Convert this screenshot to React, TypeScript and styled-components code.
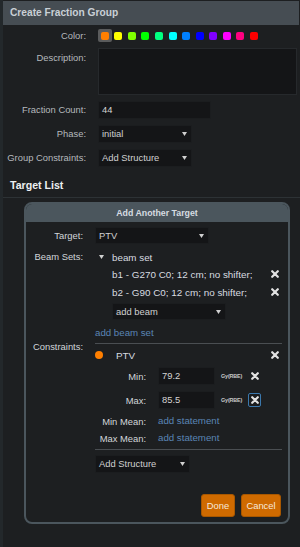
import React from 'react';
import styled, { createGlobalStyle } from 'styled-components';

const Global = createGlobalStyle`
  html, body { margin: 0; padding: 0; background: #1d1f21; }
  body { font-family: "Liberation Sans", Arial, sans-serif; font-size: 9.4px; color: #d0d4d8; }
  * { box-sizing: border-box; }
`;

const Frame = styled.div`
  width: 300px;
  height: 547px;
  background: #1d1f21;
  border-left: 3px solid #23282b;
  overflow: hidden;
  display: flex;
  flex-direction: column;
`;

const TitleBar = styled.div`
  margin: 1px 1px 0 0;
  height: 24px;
  background: #464d53;
  color: #c9d0d6;
  font-weight: bold;
  font-size: 10.2px;
  line-height: 24px;
  padding-left: 7px;
`;

const FormGrid = styled.div`
  display: grid;
  grid-template-columns: 83px 199px;
  column-gap: 12px;
  row-gap: 6px;
  padding-top: 4px;
`;

const Label = styled.div<{ $top?: boolean; $light?: boolean }>`
  text-align: right;
  color: ${p => (p.$light ? '#d2d6da' : '#b5b9bd')};
  align-self: ${p => (p.$top ? 'start' : 'center')};
  padding-top: ${p => (p.$top ? '4px' : '0')};
  white-space: nowrap;
  line-height: 12px;
`;

const Swatches = styled.div`
  display: flex;
  height: 13px;
  align-items: center;
`;

const SwatchCell = styled.div<{ $selected?: boolean }>`
  width: 13.55px;
  height: 13px;
  flex: none;
  display: flex;
  align-items: center;
  justify-content: center;
  border-radius: 2px;
  background: ${p => (p.$selected ? '#5a5b5c' : 'transparent')};
`;

const Dot = styled.div<{ $c: string }>`
  width: 8px;
  height: 8px;
  border-radius: 2px;
  background: ${p => p.$c};
`;

const TextArea = styled.div`
  height: 47px;
  width: 199px;
  background: #141517;
  border: 1px solid #26292c;
`;

const Input = styled.div<{ $w: number; $h?: number }>`
  width: ${p => p.$w}px;
  height: ${p => p.$h ?? 18}px;
  background: #141517;
  border: 1px solid #1b1d1f;
  color: #d4d4d4;
  padding-left: 3px;
  display: flex;
  align-items: center;
  line-height: 12px;
`;

const SelectBox = styled.div<{ $w: number; $h?: number }>`
  width: ${p => p.$w}px;
  height: ${p => p.$h ?? 18}px;
  background: #141517;
  border: 1px solid #1b1d1f;
  color: #d0d0d0;
  padding: 0 4px 0 3px;
  display: flex;
  align-items: center;
  justify-content: space-between;
  line-height: 12px;
  white-space: nowrap;
`;

const Heading = styled.div`
  margin-top: 12px;
  font-weight: bold;
  font-size: 10.6px;
  color: #eceff1;
  padding: 0 0 6px 7px;
  line-height: 12px;
  border-bottom: 1px solid #2d3235;
`;

const Panel = styled.div`
  margin: 4px 0 0 21px;
  width: 266px;
  border: 2px solid #4b565d;
  border-radius: 8px;
  overflow: hidden;
  background: #1d1f21;
`;

const PanelHeader = styled.div`
  height: 18px;
  background: #4b565d;
  color: #d6dce1;
  font-weight: bold;
  font-size: 8.8px;
  line-height: 18px;
  text-align: center;
`;

const PanelBody = styled.div`
  padding: 5px 6px 5px 0;
  display: flex;
  flex-direction: column;
`;

const FieldRow = styled.div<{ $mt?: number }>`
  display: grid;
  grid-template-columns: 57px 1fr;
  column-gap: 12px;
  margin-top: ${p => p.$mt ?? 0}px;
`;

const BeamBlock = styled.div`
  display: flex;
  flex-direction: column;
`;

const BeamHead = styled.div`
  height: 14px;
  display: flex;
  align-items: center;
  padding-left: 4px;
  gap: 8px;
  color: #d8dce0;
  font-size: 9.8px;
`;

const BeamList = styled.div`
  padding-left: 17px;
  display: flex;
  flex-direction: column;
`;

const ItemRow = styled.div<{ $h: number; $mt?: number }>`
  height: ${p => p.$h}px;
  margin-top: ${p => p.$mt ?? 0}px;
  display: flex;
  align-items: center;
  justify-content: space-between;
  padding-right: 3px;
  color: #d8dce0;
  font-size: 9.9px;
  white-space: nowrap;
`;

const Link = styled.div<{ $mt?: number }>`
  color: #5a85b5;
  line-height: 12px;
  font-size: 9.7px;
  margin-top: ${p => p.$mt ?? 0}px;
`;

const ConstraintBlock = styled.div`
  display: flex;
  flex-direction: column;
  padding-top: 2px;
`;

const Divider = styled.div<{ $mt?: number }>`
  height: 1px;
  background: #4a4e52;
  margin-top: ${p => p.$mt ?? 0}px;
`;

const StructName = styled.div`
  display: flex;
  align-items: center;
  gap: 13px;
`;

const Circle = styled.div`
  width: 8px;
  height: 8px;
  border-radius: 50%;
  background: #ff7f00;
`;

const CRow = styled.div<{ $h: number; $mt: number }>`
  display: flex;
  align-items: center;
  height: ${p => p.$h}px;
  margin-top: ${p => p.$mt}px;
  white-space: nowrap;
`;

const CLabel = styled.div`
  width: 51px;
  text-align: right;
  margin-right: 12px;
  color: #d2d6da;
`;

const Unit = styled.div`
  margin-left: 6px;
  width: 22px;
  font-size: 5.4px;
  font-weight: bold;
  color: #c8c8c8;
  letter-spacing: -0.15px;
`;

const XWrap = styled.div<{ $ml: number; $boxed?: boolean }>`
  margin-left: ${p => p.$ml}px;
  width: ${p => (p.$boxed ? 13 : 8)}px;
  height: ${p => (p.$boxed ? 14 : 8)}px;
  display: flex;
  align-items: center;
  justify-content: center;
  border: ${p => (p.$boxed ? '1px solid #3b78ad' : 'none')};
  border-radius: 2px;
  background: ${p => (p.$boxed ? '#1a1c1e' : 'transparent')};
`;

const Buttons = styled.div`
  display: flex;
  justify-content: flex-end;
  gap: 6px;
  margin-top: 21px;
  padding-right: 1px;
`;

const Button = styled.div<{ $w: number }>`
  width: ${p => p.$w}px;
  height: 23px;
  background: #cf6a00;
  border: 1px solid #a85700;
  border-radius: 3px;
  color: #f6e8da;
  display: flex;
  align-items: center;
  justify-content: center;
`;

const Arrow = ({ w = 5, h = 4 }: { w?: number; h?: number }) => (
  <svg width={w} height={h} viewBox={`0 0 ${w} ${h}`}>
    <polygon points={`0,0 ${w},0 ${w / 2},${h}`} fill="#d0d0d0" />
  </svg>
);

const XIcon = () => (
  <svg width="8" height="8" viewBox="0 0 8 8">
    <path d="M1.2 1.2L6.8 6.8M6.8 1.2L1.2 6.8" stroke="#e2e2e2" strokeWidth="2.2" strokeLinecap="round" />
  </svg>
);

const colors = ['#ff7f00', '#ffff00', '#80ff00', '#00ff00', '#00ff80', '#00ffff', '#0080ff', '#0000ff', '#8000ff', '#ff00ff', '#ff0080', '#ff0000'];

export default function App() {
  return (
    <>
      <Global />
      <Frame>
        <TitleBar>Create Fraction Group</TitleBar>
        <FormGrid>
          <Label>Color:</Label>
          <Swatches>
            {colors.map((c, i) => (
              <SwatchCell key={c} $selected={i === 0}>
                <Dot $c={c} />
              </SwatchCell>
            ))}
          </Swatches>
          <Label $top>Description:</Label>
          <TextArea />
          <Label>Fraction Count:</Label>
          <Input $w={113}>44</Input>
          <Label>Phase:</Label>
          <SelectBox $w={94}>initial<Arrow /></SelectBox>
          <Label>Group Constraints:</Label>
          <SelectBox $w={94}>Add Structure<Arrow /></SelectBox>
        </FormGrid>
        <Heading>Target List</Heading>
        <Panel>
          <PanelHeader>Add Another Target</PanelHeader>
          <PanelBody>
            <FieldRow>
              <Label $light>Target:</Label>
              <SelectBox $w={114} $h={17}>PTV<Arrow /></SelectBox>
            </FieldRow>
            <FieldRow $mt={6}>
              <Label $light $top style={{ paddingTop: 1 }}>Beam Sets:</Label>
              <BeamBlock>
                <BeamHead><Arrow />beam set</BeamHead>
                <BeamList>
                  <ItemRow $h={18} $mt={1}>b1 - G270 C0; 12 cm; no shifter;<XIcon /></ItemRow>
                  <ItemRow $h={18}>b2 - G90 C0; 12 cm; no shifter;<XIcon /></ItemRow>
                  <SelectBox $w={114} $h={17} style={{ marginTop: 2 }}>add beam<Arrow /></SelectBox>
                </BeamList>
              </BeamBlock>
            </FieldRow>
            <FieldRow $mt={7}>
              <div />
              <Link>add beam set</Link>
            </FieldRow>
            <FieldRow $mt={2}>
              <Label $light $top style={{ paddingTop: 0 }}>Constraints:</Label>
              <ConstraintBlock>
                <Divider />
                <ItemRow $h={14} $mt={4}>
                  <StructName><Circle />PTV</StructName>
                  <XIcon />
                </ItemRow>
                <CRow $h={18} $mt={5}>
                  <CLabel>Min:</CLabel>
                  <Input $w={57}>79.2</Input>
                  <Unit>Gy(RBE)</Unit>
                  <XWrap $ml={8}><XIcon /></XWrap>
                </CRow>
                <CRow $h={18} $mt={6}>
                  <CLabel>Max:</CLabel>
                  <Input $w={57}>85.5</Input>
                  <Unit>Gy(RBE)</Unit>
                  <XWrap $ml={5} $boxed><XIcon /></XWrap>
                </CRow>
                <CRow $h={16} $mt={4}>
                  <CLabel>Min Mean:</CLabel>
                  <Link>add statement</Link>
                </CRow>
                <CRow $h={16} $mt={1}>
                  <CLabel>Max Mean:</CLabel>
                  <Link>add statement</Link>
                </CRow>
                <Divider $mt={3} />
                <SelectBox $w={95} style={{ marginTop: 5 }}>Add Structure<Arrow /></SelectBox>
              </ConstraintBlock>
            </FieldRow>
            <Buttons>
              <Button $w={34}>Done</Button>
              <Button $w={40}>Cancel</Button>
            </Buttons>
          </PanelBody>
        </Panel>
      </Frame>
    </>
  );
}
